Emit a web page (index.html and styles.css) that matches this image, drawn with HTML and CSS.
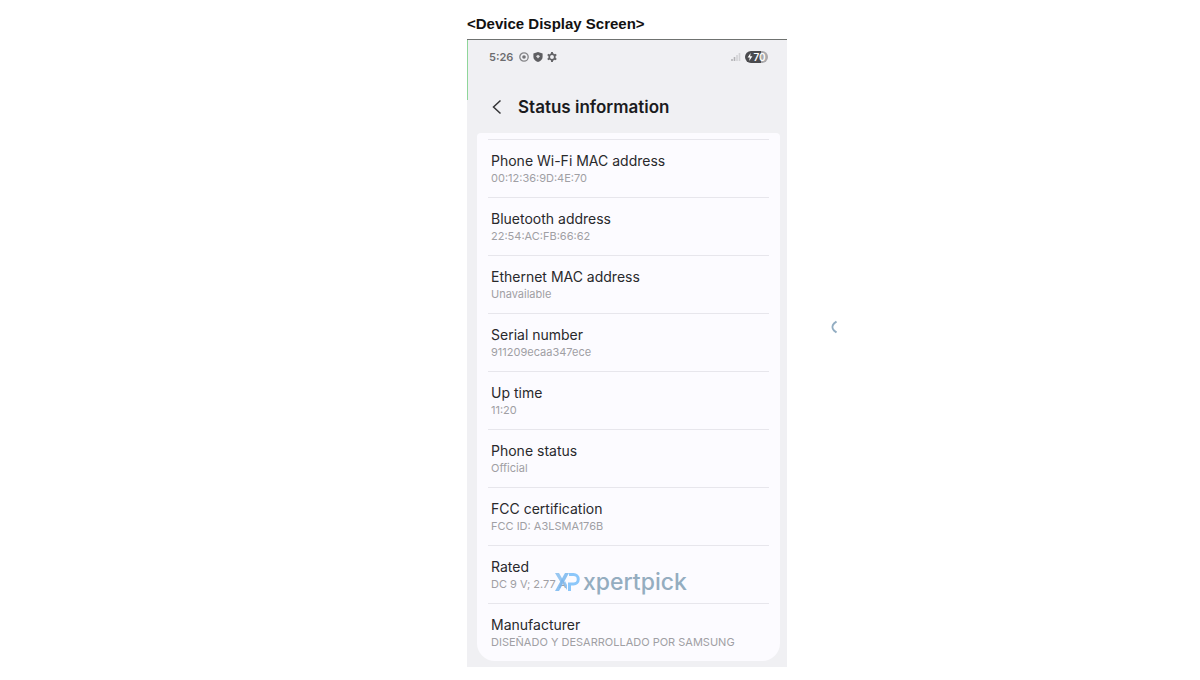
FILE: index.html
```html
<!doctype html>
<html lang="en">
    <head>
        <meta charset="utf-8">
        <meta name="viewport" content="width=device-width, initial-scale=1">
        <title>Status information</title>
        <link rel="stylesheet" href="styles.css">
    </head>

    <body>
        <main class="sheet">
            <h2 class="caption">&lt;Device Display Screen&gt;</h2>

            <div class="phone">
                <div class="statusbar">
                    <span class="time">5:26</span>
                    <svg width="10" height="10" viewBox="0 0 10 10" aria-hidden="true">
                        <circle cx="5" cy="5" r="4.2" fill="none" stroke="#858588" stroke-width="1.3"/>
                        <circle cx="5" cy="5" r="1.8" fill="#747477"/>
                    </svg>
                    <svg width="10" height="10" viewBox="0 0 10 10" aria-hidden="true">
                        <path d="M5 0L9.6 1.4V5C9.6 7.4 7.6 9 5 10C2.4 9 .4 7.4 .4 5V1.4Z" fill="#5e5e61"/>
                        <path d="M5 2.8L7 4.3L5 6.6L3 4.3Z" fill="#dedee0"/>
                    </svg>
                    <svg width="10" height="10" viewBox="0 0 10 10" aria-hidden="true">
                        <circle cx="5" cy="5" r="2.8" fill="none" stroke="#636366" stroke-width="1.7"/>
                        <path d="M5 0V2M5 8V10M.7 2.5L2.4 3.5M7.6 6.5L9.3 7.5M.7 7.5L2.4 6.5M7.6 3.5L9.3 2.5" stroke="#636366" stroke-width="1.9"/>
                    </svg>
                    <svg class="signal" width="10" height="10" viewBox="0 0 10 10" aria-hidden="true">
                        <path d="M1 9V7M3.5 9V5" stroke="#b4b4b7" stroke-width="1.6"/>
                        <path d="M6 9V3M8.5 9V1" stroke="#d2d2d5" stroke-width="1.6"/>
                    </svg>
                    <span class="battery">
                        <svg width="6" height="8" viewBox="0 0 6 8" aria-hidden="true">
                            <path d="M3.6 0L.6 4.5H2.7L2.2 8L5.4 3.3H3.2Z" fill="#fff"/>
                        </svg>70
                    </span>
                </div>

                <header class="header">
                    <button class="back" type="button" aria-label="Back">
                        <svg width="12" height="16" viewBox="0 0 12 16" aria-hidden="true">
                            <path d="M9.5 1.5L2.5 8L9.5 14.5" fill="none" stroke="#343436" stroke-width="1.5"/>
                        </svg>
                    </button>
                    <h1 class="title">Status information</h1>
                </header>

                <dl class="card">
                    <div class="row">
                        <dt>Phone Wi-Fi MAC address</dt>
                        <dd>00:12:36:9D:4E:70</dd>
                    </div>
                    <div class="row">
                        <dt>Bluetooth address</dt>
                        <dd>22:54:AC:FB:66:62</dd>
                    </div>
                    <div class="row">
                        <dt>Ethernet MAC address</dt>
                        <dd>Unavailable</dd>
                    </div>
                    <div class="row">
                        <dt>Serial number</dt>
                        <dd>911209ecaa347ece</dd>
                    </div>
                    <div class="row">
                        <dt>Up time</dt>
                        <dd>11:20</dd>
                    </div>
                    <div class="row">
                        <dt>Phone status</dt>
                        <dd>Official</dd>
                    </div>
                    <div class="row">
                        <dt>FCC certification</dt>
                        <dd>FCC ID: A3LSMA176B</dd>
                    </div>
                    <div class="row">
                        <dt>Rated</dt>
                        <dd>DC 9 V; 2.77 A</dd>
                    </div>
                    <div class="row">
                        <dt>Manufacturer</dt>
                        <dd>DISEÑADO Y DESARROLLADO POR SAMSUNG</dd>
                    </div>
                </dl>

                <div class="watermark">
                    <svg width="25" height="20" viewBox="0 0 25 20" aria-hidden="true">
                        <path d="M0 1H4L8 8L6 11ZM8 12L10 9L12 13V18Z" fill="#86bdee" fill-opacity=".85"/>
                        <path d="M10 1H14L4 19H0Z" fill="#78b6ee" fill-opacity=".85"/>
                        <path d="M14 2.5H18.5A4.7 4.7 0 0 1 18.5 12H14.5V19" fill="none" stroke="#8cc7fa" stroke-width="3"/>
                    </svg>
                    <span>xpertpick</span>
                </div>

                <svg class="edge-mark" width="8" height="14" viewBox="0 0 8 14" aria-hidden="true">
                    <path d="M6.5 1.5L4 3.5C2 5.5 2 8.5 4 10.5L6.5 12.5" fill="none" stroke="#92adc2" stroke-width="2"/>
                </svg>
            </div>
        </main>
    </body>
</html>
```
FILE: styles.css
```css
*{
    box-sizing: border-box;
}
body{
    margin: 0;
    /* keeps the sheet a little right of the middle */
    padding-left: 54px;
    background: #fff;
    color: #29292c;
    font-family: Inter, "Liberation Sans", sans-serif;
}
.sheet{
    max-width: 320px;
    margin: 0 auto;
    padding: 14px 0;
}
.caption{
    margin: 0 0 5px;
    font: bold 15px/20px "Liberation Sans", Arial, sans-serif;
    color: #111;
}
.phone{
    position: relative;
    padding: 0 7px 6px 10px;
    border-top: 1px solid #6f7270;
    background:
        linear-gradient(#8fd69a, #8fd69a) 0 0 / 1px 60px no-repeat,
        #f0f0f3;
}
.statusbar{
    display: flex;
    align-items: center;
    gap: 4px;
    height: 34px;
    padding: 0 12px;
}
.time{
    margin-right: 2px;
    font-size: 11px;
    font-weight: 600;
    color: #6c6c6f;
}
.signal{
    margin-left: auto;
}
.battery{
    display: flex;
    align-items: center;
    justify-content: center;
    width: 23px;
    height: 12px;
    border-radius: 6px;
    background: linear-gradient(90deg, #4b4b4e 70%, #a9a9ac 70%);
    color: #fff;
    font-size: 10px;
    font-weight: 600;
}
.header{
    display: flex;
    align-items: center;
    gap: 15px;
    height: 59px;
    padding: 6px 12px 0 14px;
}
.back{
    display: flex;
    padding: 0;
    border: 0;
    background: none;
}
.title{
    margin: 0;
    font-size: 17px;
    font-weight: 600;
    line-height: 24px;
    color: #1b1b1e;
}
.card{
    margin: 0;
    padding: 6px 11px 0;
    border-radius: 4px 4px 18px 18px;
    background: #fcfbff;
}
.row{
    height: 58px;
    padding: 12px 3px 0;
    border-top: 1px solid #e7e6ec;
}
.row dt{
    font-size: 14px;
    line-height: 18px;
}
.row dd{
    margin: 0;
    font-size: 11px;
    line-height: 16px;
    color: #a09fa4;
}
.watermark{
    position: absolute;
    left: 88px;
    bottom: 72px;
    display: flex;
    align-items: center;
    gap: 3px;
    color: #94adc0;
    font-size: 23px;
    font-weight: 500;
    line-height: 26px;
}
.edge-mark{
    position: absolute;
    left: 363px;
    top: 280px;
}
```
